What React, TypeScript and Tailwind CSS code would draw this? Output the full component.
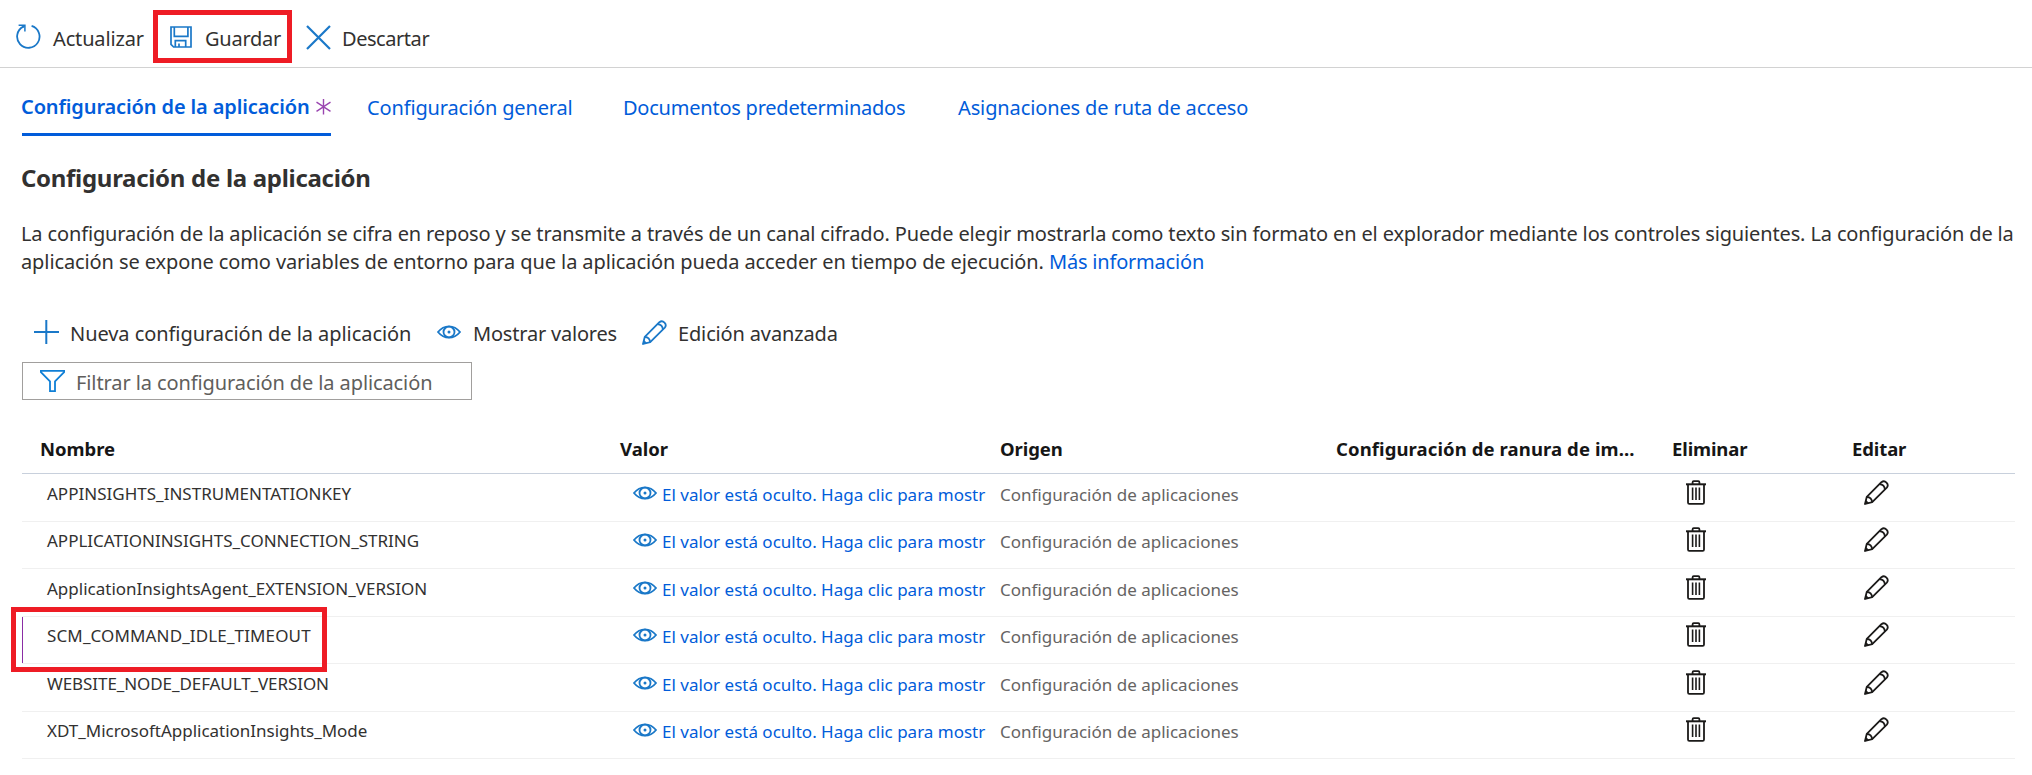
import type { ReactNode } from "react";

type IconProps = { className?: string };

const RefreshIcon = () => (
  <svg width="25" height="25" viewBox="0 0 25 25" fill="none" stroke="#1a78c8" strokeWidth="1.8">
    <path d="M15.6 1.9A11.2 11.2 0 1 1 7.3 2.6" />
    <path d="M2.6 1.2H8.9V7.4" strokeWidth="1.5" />
    <path d="M8.6 1.6L6.6 3.4" strokeWidth="1.5" />
  </svg>
);

const SaveIcon = () => (
  <svg width="22" height="22" viewBox="0 0 22 22" fill="none" stroke="#1a78c8" strokeWidth="1.7">
    <path d="M1 1h20v20H3.6L1 18.4Z" />
    <path d="M4.3 1v9.3h13.6V1" />
    <path d="M5.3 21v-6.4h10.4V21M9 21v-3.6" />
  </svg>
);

const DiscardIcon = () => (
  <svg width="25" height="25" viewBox="0 0 25 25" fill="none" stroke="#1a78c8" strokeWidth="2.2">
    <path d="M1 1l23 23M24 1L1 24" />
  </svg>
);

const PlusIcon = () => (
  <svg width="25" height="25" viewBox="0 0 25 25" fill="none" stroke="#1a78c8" strokeWidth="2">
    <path d="M12.3 0v24M0 12h25" />
  </svg>
);

const EyeIcon = ({ className = "" }: IconProps) => (
  <svg width="24" height="14" viewBox="0 0 24 14" fill="none" stroke="#1a78c8" strokeWidth="1.8" className={className}>
    <path d="M1 7C4.2 3 8 1.3 12 1.3S19.8 3 23 7c-3.2 4-7 5.7-11 5.7S4.2 11 1 7Z" />
    <ellipse cx="12" cy="7" rx="5.5" ry="5.3" />
    <circle cx="12" cy="7" r="1.5" fill="#1a78c8" stroke="none" />
  </svg>
);

const PencilIcon = ({ className = "" }: IconProps) => (
  <svg width="25" height="25" viewBox="0 0 25 25" fill="none" stroke="currentColor" strokeWidth="1.8" strokeLinejoin="round" className={className}>
    <path d="M1 24l1.8-7.2L17.4 2.2a3.85 3.85 0 0 1 5.4 5.4L8.2 22.2Z" />
    <path d="M15.5 4.1c3 .3 5.2 2.4 5.4 5.4M2.8 16.8c3 .2 5.1 2.2 5.4 5.4" />
    <path d="M1 24l1.2-3.6 2.5 2.5Z" fill="currentColor" strokeWidth=".5" />
  </svg>
);

const TrashIcon = () => (
  <svg width="20" height="25" viewBox="0 0 20 25" fill="none" stroke="#1b1a19" strokeWidth="1.8">
    <path d="M0 4.3h20" strokeWidth="2" />
    <path d="M6.6 4V2.2c0-.7.4-1.1 1.1-1.1h4.6c.7 0 1.1.4 1.1 1.1V4" />
    <path d="M2 4.5v18c0 .9.5 1.4 1.3 1.4h13.4c.8 0 1.3-.5 1.3-1.4v-18" />
    <path d="M6.6 7.5v12.4M10 7.5v12.4M13.4 7.5v12.4" strokeWidth="1.6" />
  </svg>
);

const FilterIcon = () => (
  <svg width="25" height="22" viewBox="0 0 25 22" fill="none" stroke="#0f7fd6" strokeWidth="1.8">
    <path d="M.9 .9h23.2v1.3L15 11.4v9.7h-5v-9.7L.9 2.2Z" />
  </svg>
);

const AsteriskIcon = () => (
  <svg width="15" height="16" viewBox="0 0 15 16" fill="none" stroke="#9a45b0" strokeWidth="1.4">
    <path d="M7.5 0v15.5M.5 3.2l14 9.2M14.5 3.2l-14 9.2" />
  </svg>
);

const Highlight = ({ className }: IconProps) => (
  <div className={`pointer-events-none absolute border-5 border-[#ee1c25] ${className}`} />
);

const rows = [
  { name: "APPINSIGHTS_INSTRUMENTATIONKEY", spacing: "tracking-[0.01px]" },
  { name: "APPLICATIONINSIGHTS_CONNECTION_STRING", spacing: "tracking-[0px]" },
  { name: "ApplicationInsightsAgent_EXTENSION_VERSION", spacing: "tracking-[0px]" },
  { name: "SCM_COMMAND_IDLE_TIMEOUT", spacing: "tracking-[0.13px]", modified: true },
  { name: "WEBSITE_NODE_DEFAULT_VERSION", spacing: "tracking-[-0.08px]" },
  { name: "XDT_MicrosoftApplicationInsights_Mode", spacing: "tracking-[-0.02px]" },
];

const columns = "grid grid-cols-[598px_381px_336px_336px_180px_1fr]";

const Heading = ({ children, className = "" }: { children: ReactNode; className?: string }) => (
  <div className={`whitespace-nowrap ${className}`}>{children}</div>
);

export default function App() {
  return (
    <div className="h-[775px] w-[2032px] overflow-hidden bg-white font-['Noto_Sans',sans-serif] text-[20px] leading-7 whitespace-nowrap text-[#323130]">
      <header className="flex h-[68px] items-start border-b border-[#d2d2d2] pl-4 pt-6">
        <button className="flex w-[137px] items-start gap-3">
          <RefreshIcon />
          <span className="pt-px tracking-[-0.15px]">Actualizar</span>
        </button>
        <button className="relative flex h-7 w-[153px] items-start gap-[13px] pl-[17px]">
          <span className="pt-0.5">
            <SaveIcon />
          </span>
          <span className="pt-px tracking-[-0.25px]">Guardar</span>
          <Highlight className="-top-3.5 left-0 h-[53px] w-[139px]" />
        </button>
        <button className="flex items-start gap-[11px]">
          <span className="pt-px">
            <DiscardIcon />
          </span>
          <span className="pt-px tracking-[-0.45px]">Descartar</span>
        </button>
      </header>

      <nav className="flex h-[69px] items-start pl-[22px] pt-[26px] text-[#015cda]">
        <div className="-mt-px flex h-[43px] w-[309px] items-start justify-between border-b-3 border-[#015cda]">
          <span className="-ml-px font-semibold tracking-[-0.12px]">Configuración de la aplicación</span>
          <span className="pt-[6px]">
            <AsteriskIcon />
          </span>
        </div>
        <a className="ml-9 w-[256px] tracking-[-0.15px]">Configuración general</a>
        <a className="w-[335px] tracking-[-0.23px]">Documentos predeterminados</a>
        <a className="tracking-[-0.12px]">Asignaciones de ruta de acceso</a>
      </nav>

      <main className="pl-[22px] pr-[17px] pt-[25px]">
        <h1 className="-ml-px text-[24px] leading-8 font-bold tracking-[-0.3px]">Configuración de la aplicación</h1>

        <p className="-ml-px mt-[26px]">
          <span className="tracking-[-0.137px]">
            La configuración de la aplicación se cifra en reposo y se transmite a través de un canal cifrado. Puede
            elegir mostrarla como texto sin formato en el explorador mediante los controles siguientes. La configuración
            de la
          </span>
          <br />
          <span className="tracking-[-0.1px]">
            aplicación se expone como variables de entorno para que la aplicación pueda acceder en tiempo de ejecución.{" "}
          </span>
          <a className="tracking-[-0.2px] text-[#015cda]">Más información</a>
        </p>

        <div className="mt-[43px] flex h-[43px] items-start pl-3">
          <button className="flex w-[403px] items-start gap-3">
            <span className="pt-px">
              <PlusIcon />
            </span>
            <span className="-ml-px pt-px tracking-[-0.06px]">Nueva configuración de la aplicación</span>
          </button>
          <button className="flex w-[205px] items-start gap-3">
            <EyeIcon className="mt-1.5" />
            <span className="pt-px tracking-[-0.2px]">Mostrar valores</span>
          </button>
          <button className="flex items-start gap-[11px]">
            <PencilIcon className="mt-px text-[#1a78c8]" />
            <span className="pt-px tracking-[-0.15px]">Edición avanzada</span>
          </button>
        </div>

        <div className="flex h-[38px] w-[450px] items-start gap-[11px] border border-[#a19f9d] pl-[17px] pt-[6px] text-[#605e5c]">
          <span className="pt-px">
            <FilterIcon />
          </span>
          <span className="tracking-[-0.1px]">Filtrar la configuración de la aplicación</span>
        </div>

        <div
          className={`${columns} mt-[23px] h-[51px] border-b border-[#c8d0dc] pt-[13px] text-[18.5px] leading-[26px] font-bold text-[#161616]`}
        >
          <Heading className="pl-[18px] tracking-[-0.05px]">Nombre</Heading>
          <Heading>Valor</Heading>
          <Heading className="-ml-px tracking-[-0.1px]">Origen</Heading>
          <Heading className="-ml-px tracking-[0.1px]">Configuración de ranura de im...</Heading>
          <Heading className="-ml-px tracking-[-0.12px]">Eliminar</Heading>
          <Heading className="-ml-px tracking-[-0.12px]">Editar</Heading>
        </div>

        <div>
          {rows.map((row) => (
            <div
              key={row.name}
              className={`${columns} relative border-b border-[#f0f0f0] text-[17px] leading-6 odd:h-[48px] odd:pt-[6px] even:h-[47px] even:pt-[5px]`}
            >
              <div className={`pt-0.5 pl-[25px] ${row.spacing}`}>{row.name}</div>
              <div className="flex items-start gap-[5px] pl-[13px] text-[#015cda]">
                <EyeIcon className="mt-[6px] shrink-0" />
                <span className="pt-[3px]">El valor está oculto. Haga clic para mostr</span>
              </div>
              <div className="-ml-px pt-[3px] text-[#666463]">Configuración de aplicaciones</div>
              <div />
              <div className="pl-[13px]">
                <TrashIcon />
              </div>
              <div className="pl-[11px]">
                <PencilIcon className="text-[#1b1a19]" />
              </div>
              {row.modified && (
                <>
                  <div className="absolute top-0 left-0 h-[46px] w-px bg-[#8a2da5]" />
                  <Highlight className="-top-2.5 -left-[11px] h-[65px] w-[316px]" />
                </>
              )}
            </div>
          ))}
        </div>
      </main>
    </div>
  );
}
